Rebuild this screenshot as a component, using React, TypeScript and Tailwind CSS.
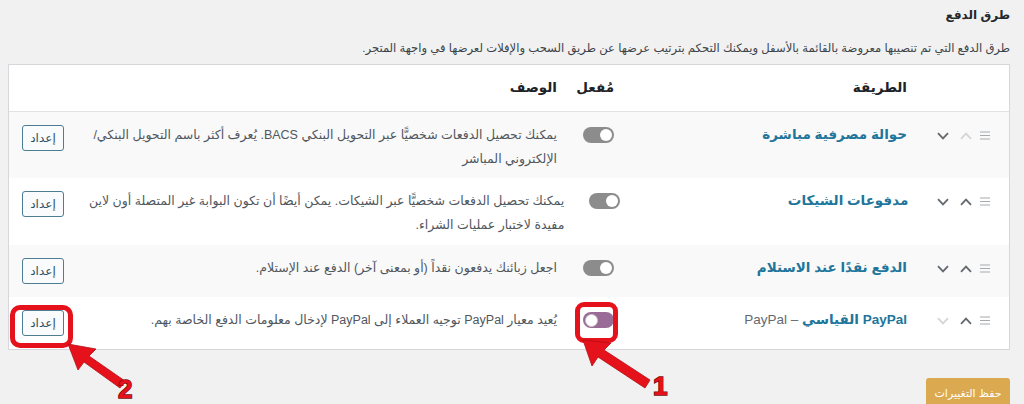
import React from "react";

type Row = {
  name: React.ReactNode;
  desc: string[];
  h: string;
  bg: string;
  upLight: boolean;
  downLight: boolean;
  on: boolean;
};

const Chevron = ({ up, light }: { up?: boolean; light?: boolean }) => (
  <svg width="12" height="8" viewBox="0 0 12 8" className="block">
    <polyline
      points={up ? "1,6.8 6,1.6 11,6.8" : "1,1.2 6,6.4 11,1.2"}
      fill="none"
      stroke={light ? "#d3d5d8" : "#646970"}
      strokeWidth="1.8"
    />
  </svg>
);

const Burger = () => (
  <svg width="10" height="9" viewBox="0 0 10 9" className="block">
    <path d="M0 1h10M0 4.5h10M0 8h10" stroke="#a7aaad" strokeWidth="1.2" />
  </svg>
);

const Toggle = ({ on }: { on: boolean }) =>
  on ? (
    <div className="w-[31px] h-[16px] rounded-full bg-[#9b6b97] flex items-center justify-end px-[2px]">
      <div className="w-[13px] h-[13px] rounded-full bg-white border border-[#c9c9c9]" />
    </div>
  ) : (
    <div className="w-[31px] h-[16px] rounded-full bg-[#8c8c8c] flex items-center justify-start px-[2px]">
      <div className="w-[12px] h-[12px] rounded-full bg-white" />
    </div>
  );

const rows: Row[] = [
  {
    name: <span className="font-bold text-[#21759b]">حوالة مصرفية مباشرة</span>,
    desc: [
      "يمكنك تحصيل الدفعات شخصيًّا عبر التحويل البنكي BACS. يُعرف أكثر باسم التحويل البنكي/",
      "الإلكتروني المباشر",
    ],
    h: "h-[66px]",
    bg: "bg-[#f9f9f9]",
    upLight: true,
    downLight: false,
    on: false,
  },
  {
    name: <span className="font-bold text-[#21759b]">مدفوعات الشيكات</span>,
    desc: [
      "يمكنك تحصيل الدفعات شخصيًّا عبر الشيكات. يمكن أيضًا أن تكون البوابة غير المتصلة أون لاين",
      "مفيدة لاختبار عمليات الشراء.",
    ],
    h: "h-[67px]",
    bg: "bg-white",
    upLight: false,
    downLight: false,
    on: false,
  },
  {
    name: <span className="font-bold text-[#21759b]">الدفع نقدًا عند الاستلام</span>,
    desc: ["اجعل زبائنك يدفعون نقداً (أو بمعنى آخر) الدفع عند الإستلام."],
    h: "h-[52px]",
    bg: "bg-[#f9f9f9]",
    upLight: false,
    downLight: false,
    on: false,
  },
  {
    name: (
      <>
        <span className="font-bold text-[#21759b]">PayPal القياسي</span>
        <span className="text-[#646970]"> – PayPal</span>
      </>
    ),
    desc: ["يُعيد معيار PayPal توجيه العملاء إلى PayPal لإدخال معلومات الدفع الخاصة بهم."],
    h: "h-[52px]",
    bg: "bg-white",
    upLight: false,
    downLight: true,
    on: true,
  },
];

export default function App() {
  return (
    <div
      dir="rtl"
      className="relative w-[1024px] h-[404px] overflow-hidden bg-[#f1f1f1] font-['Liberation_Sans','DejaVu_Sans',sans-serif] text-[#3c434a]"
    >
      <div className="pr-[14px] pl-[8px]">
        <h2 className="pt-[5px] text-[12px] leading-[20px] font-bold text-[#23282d]">طرق الدفع</h2>
        <p className="mt-[13px] text-[11.6px] leading-[20px] text-[#3c434a]">
          طرق الدفع التي تم تنصيبها معروضة بالقائمة بالأسفل ويمكنك التحكم بترتيب عرضها عن طريق السحب والإفلات لعرضها في واجهة المتجر.
        </p>

        <div className="mt-[6px] border border-[#d5d7da] bg-white">
          {/* header */}
          <div className="flex h-[47px] items-center border-b border-[#e1e2e4] text-[13.5px] font-semibold text-[#1d2327]">
            <div className="w-[92px]" />
            <div className="w-[293px] pr-[10px]">الطريقة</div>
            <div className="w-[57px] pr-[10px]">مُفعل</div>
            <div className="flex-1 pr-[10px]">الوصف</div>
          </div>
          {rows.map((r, i) => (
            <div key={i} className={`flex ${r.h} ${r.bg}`}>
              <div className="w-[92px] pt-[19px] pr-[19px] flex items-start">
                <Burger />
                <div className="mr-[8px] mt-[1px]">
                  <Chevron up light={r.upLight} />
                </div>
                <div className="mr-[11px] mt-[1px]">
                  <Chevron light={r.downLight} />
                </div>
              </div>
              <div className="w-[293px] pr-[10px] pt-[11px] text-[13.5px] leading-[24px]">{r.name}</div>
              <div className="w-[57px] pr-[10px] pt-[15px]">
                <Toggle on={r.on} />
              </div>
              <div className="flex-1 pr-[10px] pl-[10px] pt-[11px] text-[12.5px] leading-[24px] text-[#50575e]">
                {r.desc.map((l, j) => (
                  <div key={j} className="whitespace-nowrap">
                    {l}
                  </div>
                ))}
              </div>
              <div className="w-[71px] pt-[13px] pl-[13px] flex justify-end">
                <button className="w-[42px] h-[26px] rounded-[3px] border border-[#4d7d93] bg-[#f9fbfc] text-[12px] text-[#2c4f60] leading-[24px]">
                  إعداد
                </button>
              </div>
            </div>
          ))}
        </div>

        <div className="mt-[28px] flex">
          <button className="w-[84px] h-[30px] rounded-[3px] bg-[#dba94f] text-white text-[11px] leading-[28px]">
            حفظ التغييرات
          </button>
        </div>
      </div>

      {/* annotations overlay */}
      <div className="absolute left-[575px] top-[302px] w-[43px] h-[41px] rounded-[9px] border-[5px] border-[#e5121c]" />
      <div className="absolute left-[10px] top-[305px] w-[63px] h-[43px] rounded-[10px] border-[5px] border-[#e5121c]" />
      <svg
        dir="ltr"
        className="absolute inset-0 pointer-events-none"
        width="1024"
        height="404"
        viewBox="0 0 1024 404"
      >
        <g fill="#e5121c" stroke="#b50d14" strokeWidth="0.8" strokeLinejoin="round">
          {/* arrow 2 */}
          <polygon points="68,344 96,349 89,356 125,381 120,388 84,362 78,370" />
          {/* arrow 1 */}
          <polygon points="583,340 611,343 604,350 650,380 645,388 598,357 592,366" />
        </g>
        <g
          fontFamily="'Liberation Sans', sans-serif"
          fontWeight="bold"
          fontSize="26"
          fill="#e5121c"
          stroke="#7a0a0a"
          strokeWidth="1.5"
          paintOrder="stroke"
          direction="ltr"
          textAnchor="start"
        >
          <text x="118" y="398">2</text>
          <text x="653" y="395">1</text>
        </g>
      </svg>
    </div>
  );
}
